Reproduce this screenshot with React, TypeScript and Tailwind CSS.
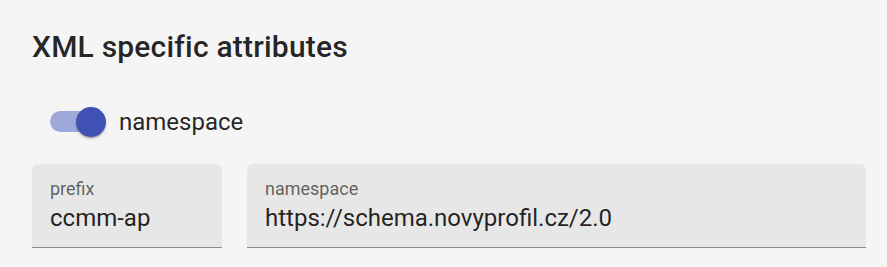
import React from "react";

function Field({ label, value, className }: { label: string; value: string; className: string }) {
  return (
    <div className={`flex flex-col h-[84px] px-[18px] pt-[12px] rounded-t-[6px] bg-[#e7e7e7] border-b-[1.5px] border-[#8a8a8a] ${className}`}>
      <div className="text-[18px] leading-[26px] text-[rgba(0,0,0,0.6)]">{label}</div>
      <div className="-mt-[1px] text-[24px] leading-[34px] text-[rgba(0,0,0,0.87)] whitespace-nowrap">{value}</div>
    </div>
  );
}

export default function App() {
  return (
    <div className="w-[887px] h-[267px] bg-[#f5f5f5] overflow-hidden pl-[32px] pr-[21px] pt-[23px]" style={{ fontFamily: "Roboto, 'Liberation Sans', sans-serif" }}>
      <h6 className="text-[30px] leading-[48px] font-medium text-[rgba(0,0,0,0.87)] tracking-[0.2px]">XML specific attributes</h6>
      <div className="mt-[22px] flex items-center h-[57px]">
        <div className="w-[87px] h-[57px] shrink-0 flex items-center pl-[18px]">
          <div className="w-[51px] h-[21px] shrink-0 rounded-full bg-[#9fa8da]" />
          <div className="-ml-[25.5px] w-[30px] h-[30px] shrink-0 rounded-full bg-[#3f51b5] shadow-[0_3px_1.5px_-2px_rgba(0,0,0,0.2),0_1.5px_1.5px_0_rgba(0,0,0,0.14),0_1.5px_4.5px_0_rgba(0,0,0,0.12)]" />
        </div>
        <span className="text-[24px] leading-[36px] text-[rgba(0,0,0,0.87)]">namespace</span>
      </div>
      <div className="mt-[14px] flex gap-[25px]">
        <Field label="prefix" value="ccmm-ap" className="w-[190px] shrink-0" />
        <Field label="namespace" value="https://schema.novyprofil.cz/2.0" className="flex-1" />
      </div>
    </div>
  );
}
